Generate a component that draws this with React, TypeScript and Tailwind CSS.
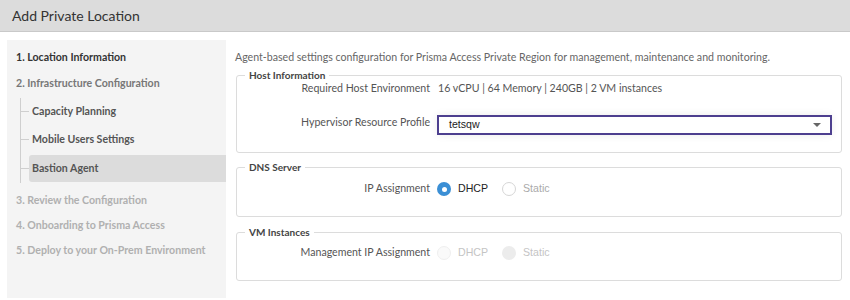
import React from "react";

const lato = { fontFamily: "Lato, 'Open Sans', sans-serif" };
const arial = { fontFamily: "'Liberation Sans', Arial, sans-serif" };

function Radio({ state }: { state: "on" | "off" | "disabledOff" | "disabledFill" }) {
  if (state === "on")
    return (
      <span className="flex h-[14px] w-[14px] shrink-0 items-center justify-center rounded-full bg-[#3b8fd5]">
        <span className="block h-[5px] w-[5px] rounded-full bg-white" />
      </span>
    );
  if (state === "off")
    return <span className="block h-[14px] w-[14px] shrink-0 rounded-full border border-[#d6d6d6] bg-white" />;
  if (state === "disabledFill")
    return <span className="block h-[14px] w-[14px] shrink-0 rounded-full bg-[#ececec]" />;
  return <span className="block h-[14px] w-[14px] shrink-0 rounded-full border border-[#efefef] bg-[#fafafa]" />;
}

export default function App() {
  return (
    <div className="h-[300px] w-[850px] overflow-hidden bg-white text-[10.6px] text-[#555]" style={lato}>
      <div className="flex h-[32px] items-center border-b border-[#c9c9c9] bg-[#dcdcdc] pl-[12px] text-[14px] text-[#333]">
        Add Private Location
      </div>
      <div className="flex pt-[8px] pl-[7px]">
        {/* sidebar */}
        <div className="h-[258px] w-[219px] bg-[#f4f4f4] pt-[5px] pl-[9px]">
          <div className="flex h-[26px] items-center font-bold text-[#333]">1. Location Information</div>
          <div className="flex h-[26px] items-center font-bold text-[#777]">2. Infrastructure Configuration</div>
          <div className="mt-px ml-[4px] flex flex-col gap-[1px] border-l border-[#cfcfcf] pb-px">
            {["Capacity Planning", "Mobile Users Settings", "Bastion Agent"].map((t, i) => (
              <div key={t} className={"flex h-[27px] items-center " + (i === 2 ? "mt-[1px]" : "")}>
                <span className="h-px w-[8px] bg-[#cfcfcf]" />
                <div
                  className={
                    "flex h-full flex-1 items-center rounded-l-[3px] pl-[3px] font-bold text-[#555] " +
                    (i === 2 ? "bg-[#dcdcdc]" : "")
                  }
                >
                  {t}
                </div>
              </div>
            ))}
          </div>
          <div className="mt-[5px] flex h-[25px] items-center font-bold text-[#b0b0b0]">3. Review the Configuration</div>
          <div className="flex h-[25px] items-center font-bold text-[#b0b0b0]">4. Onboarding to Prisma Access</div>
          <div className="flex h-[25px] items-center font-bold text-[#b0b0b0]">5. Deploy to your On-Prem Environment</div>
        </div>
        {/* content */}
        <div className="ml-[9px] flex-1 pr-[8px]">
          <div className="mt-[11px] flex h-[14px] items-center text-[#666]">
            Agent-based settings configuration for Prisma Access Private Region for management, maintenance and monitoring.
          </div>
          {/* Host Information */}
          <fieldset className="mt-[3px] ml-px rounded-[3px] border border-[#dcdcdc] px-[8px] pb-[17px]">
            <legend className="px-[4px] text-[10px] leading-[14px] font-bold text-[#444]">Host Information</legend>
            <div className="flex h-[14px] items-center">
              <div className="w-[185px] text-right">Required Host Environment</div>
              <div className="ml-[8px]">16 vCPU | 64 Memory | 240GB | 2 VM instances</div>
            </div>
            <div className="mt-[19px] flex items-start">
              <div className="w-[185px] text-right leading-[14px]">Hypervisor Resource Profile</div>
              <div
                className="mr-[1px] ml-[7px] flex h-[20px] flex-1 items-center justify-between border-2 border-[#4d3f8f] bg-white pr-[9px] pl-[10px] text-[#222] shadow-[0_0_8px_rgba(0,0,0,0.08)]"
                style={arial}
              >
                <span>tetsqw</span>
                <span className="h-0 w-0 border-x-[4px] border-t-[4px] border-x-transparent border-t-[#666]" />
              </div>
            </div>
          </fieldset>
          {/* DNS Server */}
          <fieldset className="mt-[7px] ml-px rounded-[3px] border border-[#dcdcdc] px-[8px] pb-[20px]">
            <legend className="px-[4px] text-[10px] leading-[14px] font-bold text-[#444]">DNS Server</legend>
            <div className="mt-[8px] flex h-[14px] items-center">
              <div className="w-[185px] text-right">IP Assignment</div>
              <div className="ml-[7px] flex items-center" style={arial}>
                <Radio state="on" />
                <span className="ml-[7px] text-[#222]">DHCP</span>
                <span className="ml-[14px]"><Radio state="off" /></span>
                <span className="ml-[7px] text-[#aaa]">Static</span>
              </div>
            </div>
          </fieldset>
          {/* VM Instances */}
          <fieldset className="mt-[8px] ml-px rounded-[3px] border border-[#dcdcdc] px-[8px] pb-[20px]">
            <legend className="px-[4px] text-[10px] leading-[14px] font-bold text-[#444]">VM Instances</legend>
            <div className="mt-[7px] flex h-[14px] items-center">
              <div className="w-[185px] text-right">Management IP Assignment</div>
              <div className="ml-[7px] flex items-center" style={arial}>
                <Radio state="disabledOff" />
                <span className="ml-[7px] text-[#c4c4c4]">DHCP</span>
                <span className="ml-[14px]"><Radio state="disabledFill" /></span>
                <span className="ml-[7px] text-[#c4c4c4]">Static</span>
              </div>
            </div>
          </fieldset>
        </div>
      </div>
    </div>
  );
}
